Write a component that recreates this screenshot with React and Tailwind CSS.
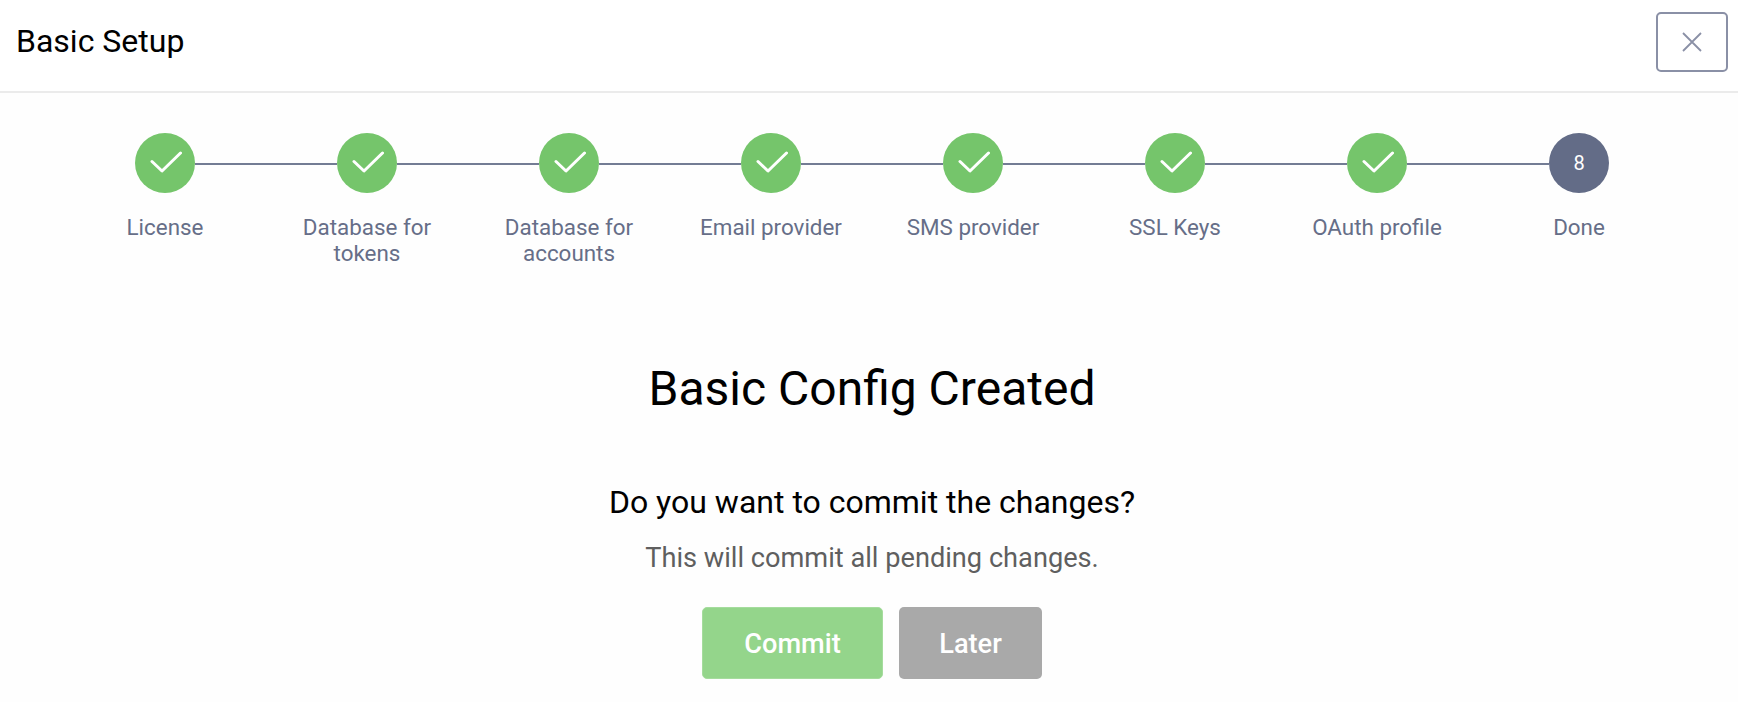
import React from "react";

const steps = ["License", "Database for tokens", "Database for accounts", "Email provider", "SMS provider", "SSL Keys", "OAuth profile", "Done"];

function Check() {
  return (
    <svg width="32" height="24" viewBox="0 0 32 24" fill="none" stroke="#ffffff" strokeWidth="3" strokeLinecap="round" strokeLinejoin="round" className="ml-[2px]">
      <path d="M2 10.5 L12 20 L30.5 2" />
    </svg>
  );
}

export default function App() {
  return (
    <div className="w-[1738px] h-[702px] overflow-hidden bg-[#fefefe] font-['Roboto',sans-serif]">
      <header className="h-[93px] bg-white border-b-2 border-[#ebebeb] flex items-start justify-between pl-4 pr-[10px] pt-[12px]">
        <h1 className="text-[32px] leading-[58px] text-black">Basic Setup</h1>
        <button className="w-[72px] h-[60px] rounded-[5px] border-2 border-[#8a90a6] bg-white flex items-center justify-center">
          <svg width="20" height="20" viewBox="0 0 20 20" stroke="#8a90a6" strokeWidth="1.8" fill="none">
            <path d="M1 1 L19 19 M19 1 L1 19" />
          </svg>
        </button>
      </header>
      <div className="pl-[64px] pt-[40px] flex">
        {steps.map((s, i) => (
          <div key={s} className="w-[202px] flex flex-col items-center">
            <div className="w-full flex items-center">
              <div className={`flex-1 h-[2px] mt-[2px] ${i === 0 ? "" : "bg-[#737c94]"}`} />
              <div className={`w-[60px] h-[60px] rounded-full flex items-center justify-center text-white text-[20px] ${i === 7 ? "bg-[#636c87]" : "bg-[#75c56b]"}`}>
                {i === 7 ? "8" : <Check />}
              </div>
              <div className={`flex-1 h-[2px] mt-[2px] ${i === 7 ? "" : "bg-[#737c94]"}`} />
            </div>
            <div className="mt-[21px] w-[150px] text-center text-[#666e88] text-[22.4px] leading-[26px]">{s}</div>
          </div>
        ))}
      </div>
      <main className="flex flex-col items-center pl-[6px]">
        <h2 className="mt-[93px] text-[48px] leading-[60px] text-black">Basic Config Created</h2>
        <h3 className="mt-[63px] text-[32px] leading-[40px] text-black">Do you want to commit the changes?</h3>
        <p className="mt-[18px] text-[27.2px] leading-[36px] text-[#5f5f5f]">This will commit all pending changes.</p>
        <div className="mt-[31px] flex gap-4">
          <button className="w-[181px] h-[72px] pt-[2px] rounded-[5px] bg-[#94d58b] border border-[#a5dc9d] text-white text-[27.2px] font-medium">Commit</button>
          <button className="w-[143px] h-[72px] pt-[2px] rounded-[5px] bg-[#a9a9a9] text-white text-[27.2px] font-medium">Later</button>
        </div>
      </main>
    </div>
  );
}
